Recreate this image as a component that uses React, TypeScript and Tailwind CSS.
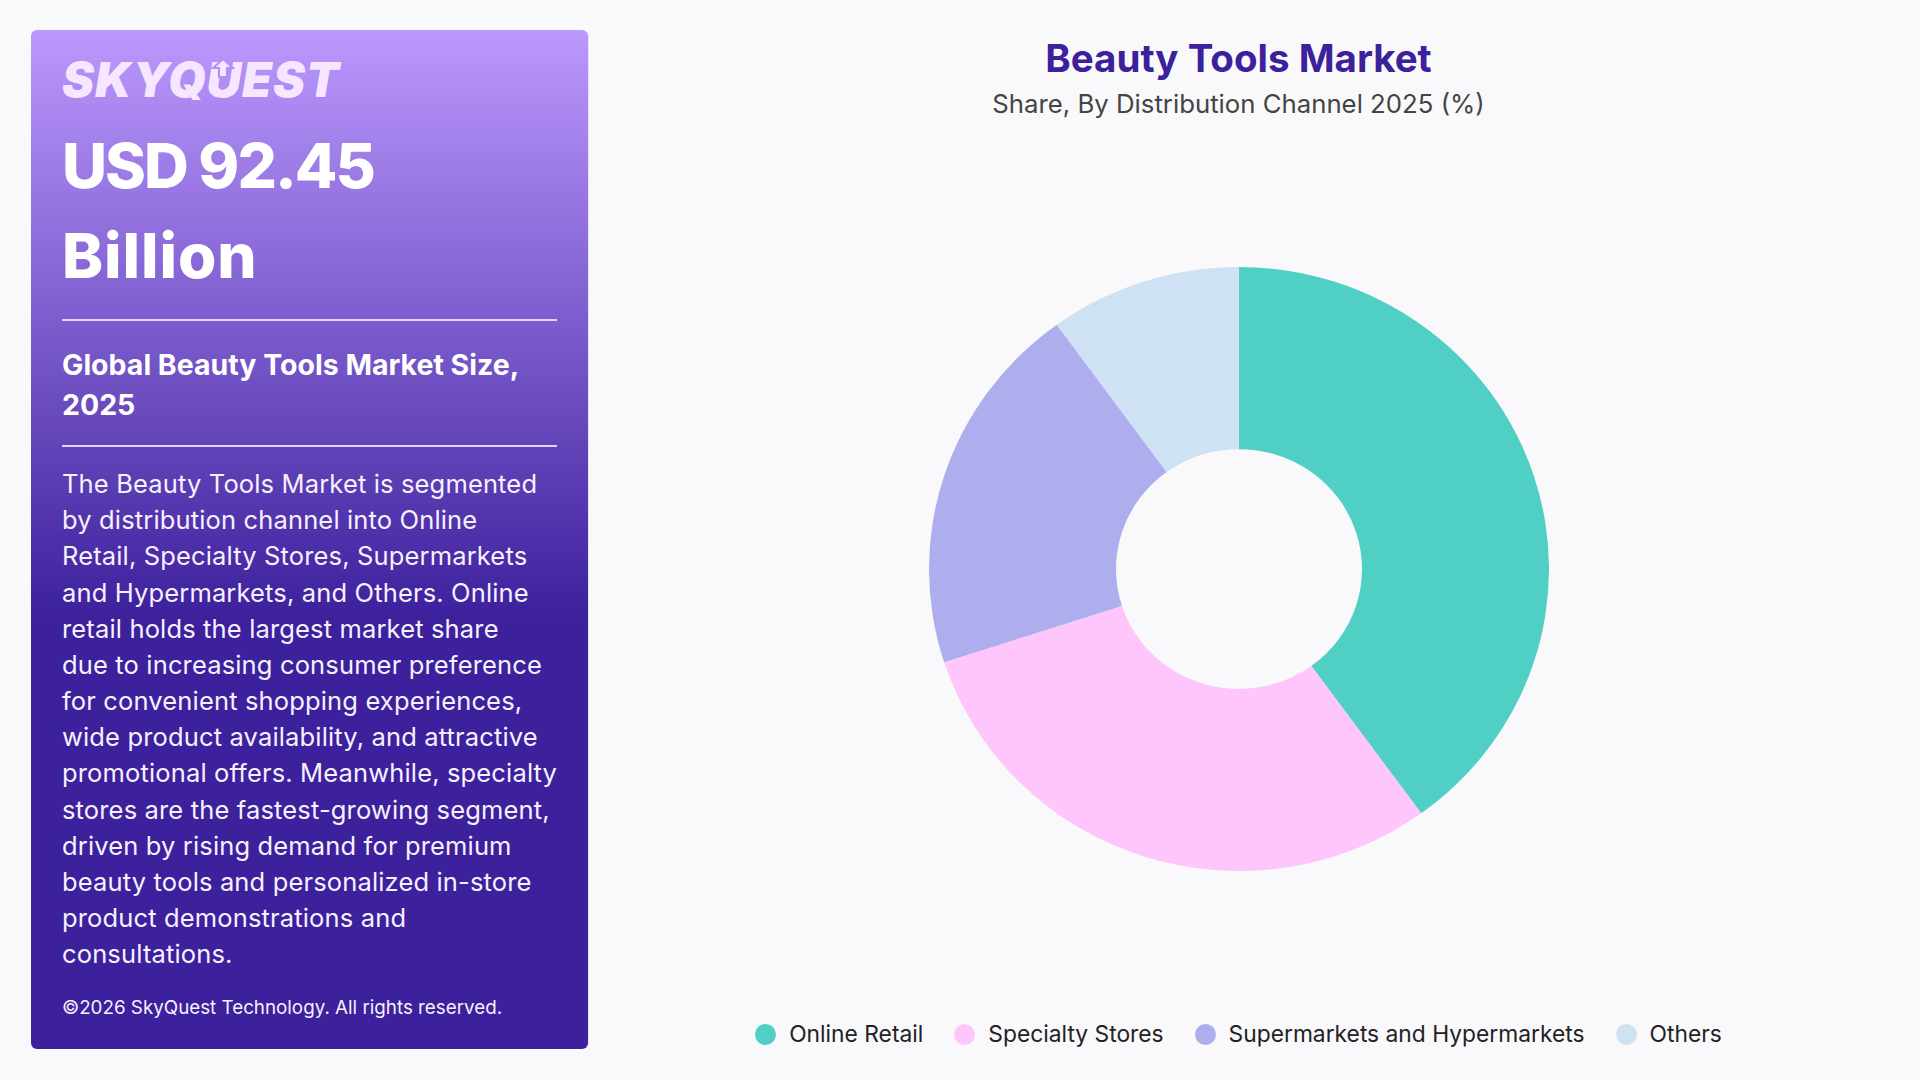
const body = [
  "The Beauty Tools Market is segmented",
  "by distribution channel into Online",
  "Retail, Specialty Stores, Supermarkets",
  "and Hypermarkets, and Others. Online",
  "retail holds the largest market share",
  "due to increasing consumer preference",
  "for convenient shopping experiences,",
  "wide product availability, and attractive",
  "promotional offers. Meanwhile, specialty",
  "stores are the fastest-growing segment,",
  "driven by rising demand for premium",
  "beauty tools and personalized in-store",
  "product demonstrations and",
  "consultations.",
];

const legend = [
  { label: "Online Retail", color: "bg-[#50cfc5]" },
  { label: "Specialty Stores", color: "bg-[#ffc6fc]" },
  { label: "Supermarkets and Hypermarkets", color: "bg-[#aeaeee]" },
  { label: "Others", color: "bg-[#cfe2f3]" },
];

const slices = [
  { pct: 40, fill: "#50cfc5" },
  { pct: 30, fill: "#ffc6fc" },
  { pct: 20, fill: "#aeaeee" },
  { pct: 10, fill: "#cfe2f3" },
];

// ring segment, angles in percent of the circle, 0 at the top
function slicePath(from: number, to: number) {
  const R = 310;
  const r = 123;
  const pt = (rad: number, p: number) => {
    const a = (p / 100) * 2 * Math.PI;
    return `${(rad * Math.sin(a)).toFixed(2)} ${(-rad * Math.cos(a)).toFixed(2)}`;
  };
  const large = to - from > 50 ? 1 : 0;
  return `M${pt(R, from)} A${R} ${R} 0 ${large} 1 ${pt(R, to)} L${pt(r, to)} A${r} ${r} 0 ${large} 0 ${pt(r, from)} Z`;
}

function Donut() {
  let at = 0;
  return (
    <svg viewBox="-310 -310 620 620" preserveAspectRatio="none" className="h-[604px] w-[620px]">
      {slices.map((s) => {
        const d = slicePath(at, at + s.pct);
        at += s.pct;
        return <path key={s.fill} d={d} fill={s.fill} />;
      })}
    </svg>
  );
}

function Logo() {
  return (
    <div className="relative h-[50px] w-fit text-[48px] font-black italic leading-[50px] tracking-[1px] text-[#f7e6ff]">
      SKYQUEST
      {/* the arrow that sits in the U of the wordmark */}
      <svg viewBox="0 0 26 20" className="absolute left-[148px] top-[3px] h-[20px] w-[26px]">
        <path d="M13 1 L23 10 H17 V19 H9 V10 H3 Z" fill="#f7e6ff" stroke="#b48ef7" strokeWidth="2" />
      </svg>
    </div>
  );
}

export default function App() {
  return (
    <div className="flex h-[1080px] w-[1920px] bg-[#f9f9fc] p-[31px] pt-[30px] font-['Inter',sans-serif]">
      <aside className="flex h-[1019px] w-[557px] shrink-0 flex-col rounded-md bg-[linear-gradient(180deg,#bb98fd_0%,#3c209c_58%)] px-[31px] pt-[25px] text-white shadow-[1px_0_0_#e9e2fb]">
        <Logo />
        <h1 className="mt-[16px] text-[62px] font-extrabold leading-[90px]">
          <span className="block tracking-[-2px]">USD 92.45</span>
          <span className="block tracking-[0.9px]">Billion</span>
        </h1>
        <div className="mt-[18px] h-[2px] bg-[#e3d7f7]" />
        <h2 className="mt-[24px] text-[28.5px] font-bold leading-[40px]">
          Global Beauty Tools Market Size,
          <br />
          2025
        </h2>
        <div className="mt-[20px] h-[2px] bg-[#e3d7f7]" />
        <p className="mt-[19px] text-[25.5px] leading-[36.17px] tracking-[0.15px] text-[#f6f1fe]">
          {body.map((line) => (
            <span key={line} className="block whitespace-nowrap">
              {line}
            </span>
          ))}
        </p>
        <p className="mt-[21px] text-[18.8px] leading-[30px] text-[#f6f1fe]">©2026 SkyQuest Technology. All rights reserved.</p>
      </aside>
      <main className="flex flex-1 flex-col items-center pt-[4px]">
        <h2 className="text-[38.5px] font-bold leading-[48px] text-[#3c209c]">Beauty Tools Market</h2>
        <p className="mt-[3px] text-[25.75px] leading-[38px] text-[#444444]">Share, By Distribution Channel 2025 (%)</p>
        <div className="mt-[144px]">
          <Donut />
        </div>
        <div className="mt-[148px] flex items-center gap-[31px]">
          {legend.map((item) => (
            <div key={item.label} className="flex items-center gap-[13px]">
              <span className={`h-[21px] w-[21px] rounded-full ${item.color}`} />
              <span className="text-[22.8px] leading-[30px] text-[#222222]">{item.label}</span>
            </div>
          ))}
        </div>
      </main>
    </div>
  );
}
